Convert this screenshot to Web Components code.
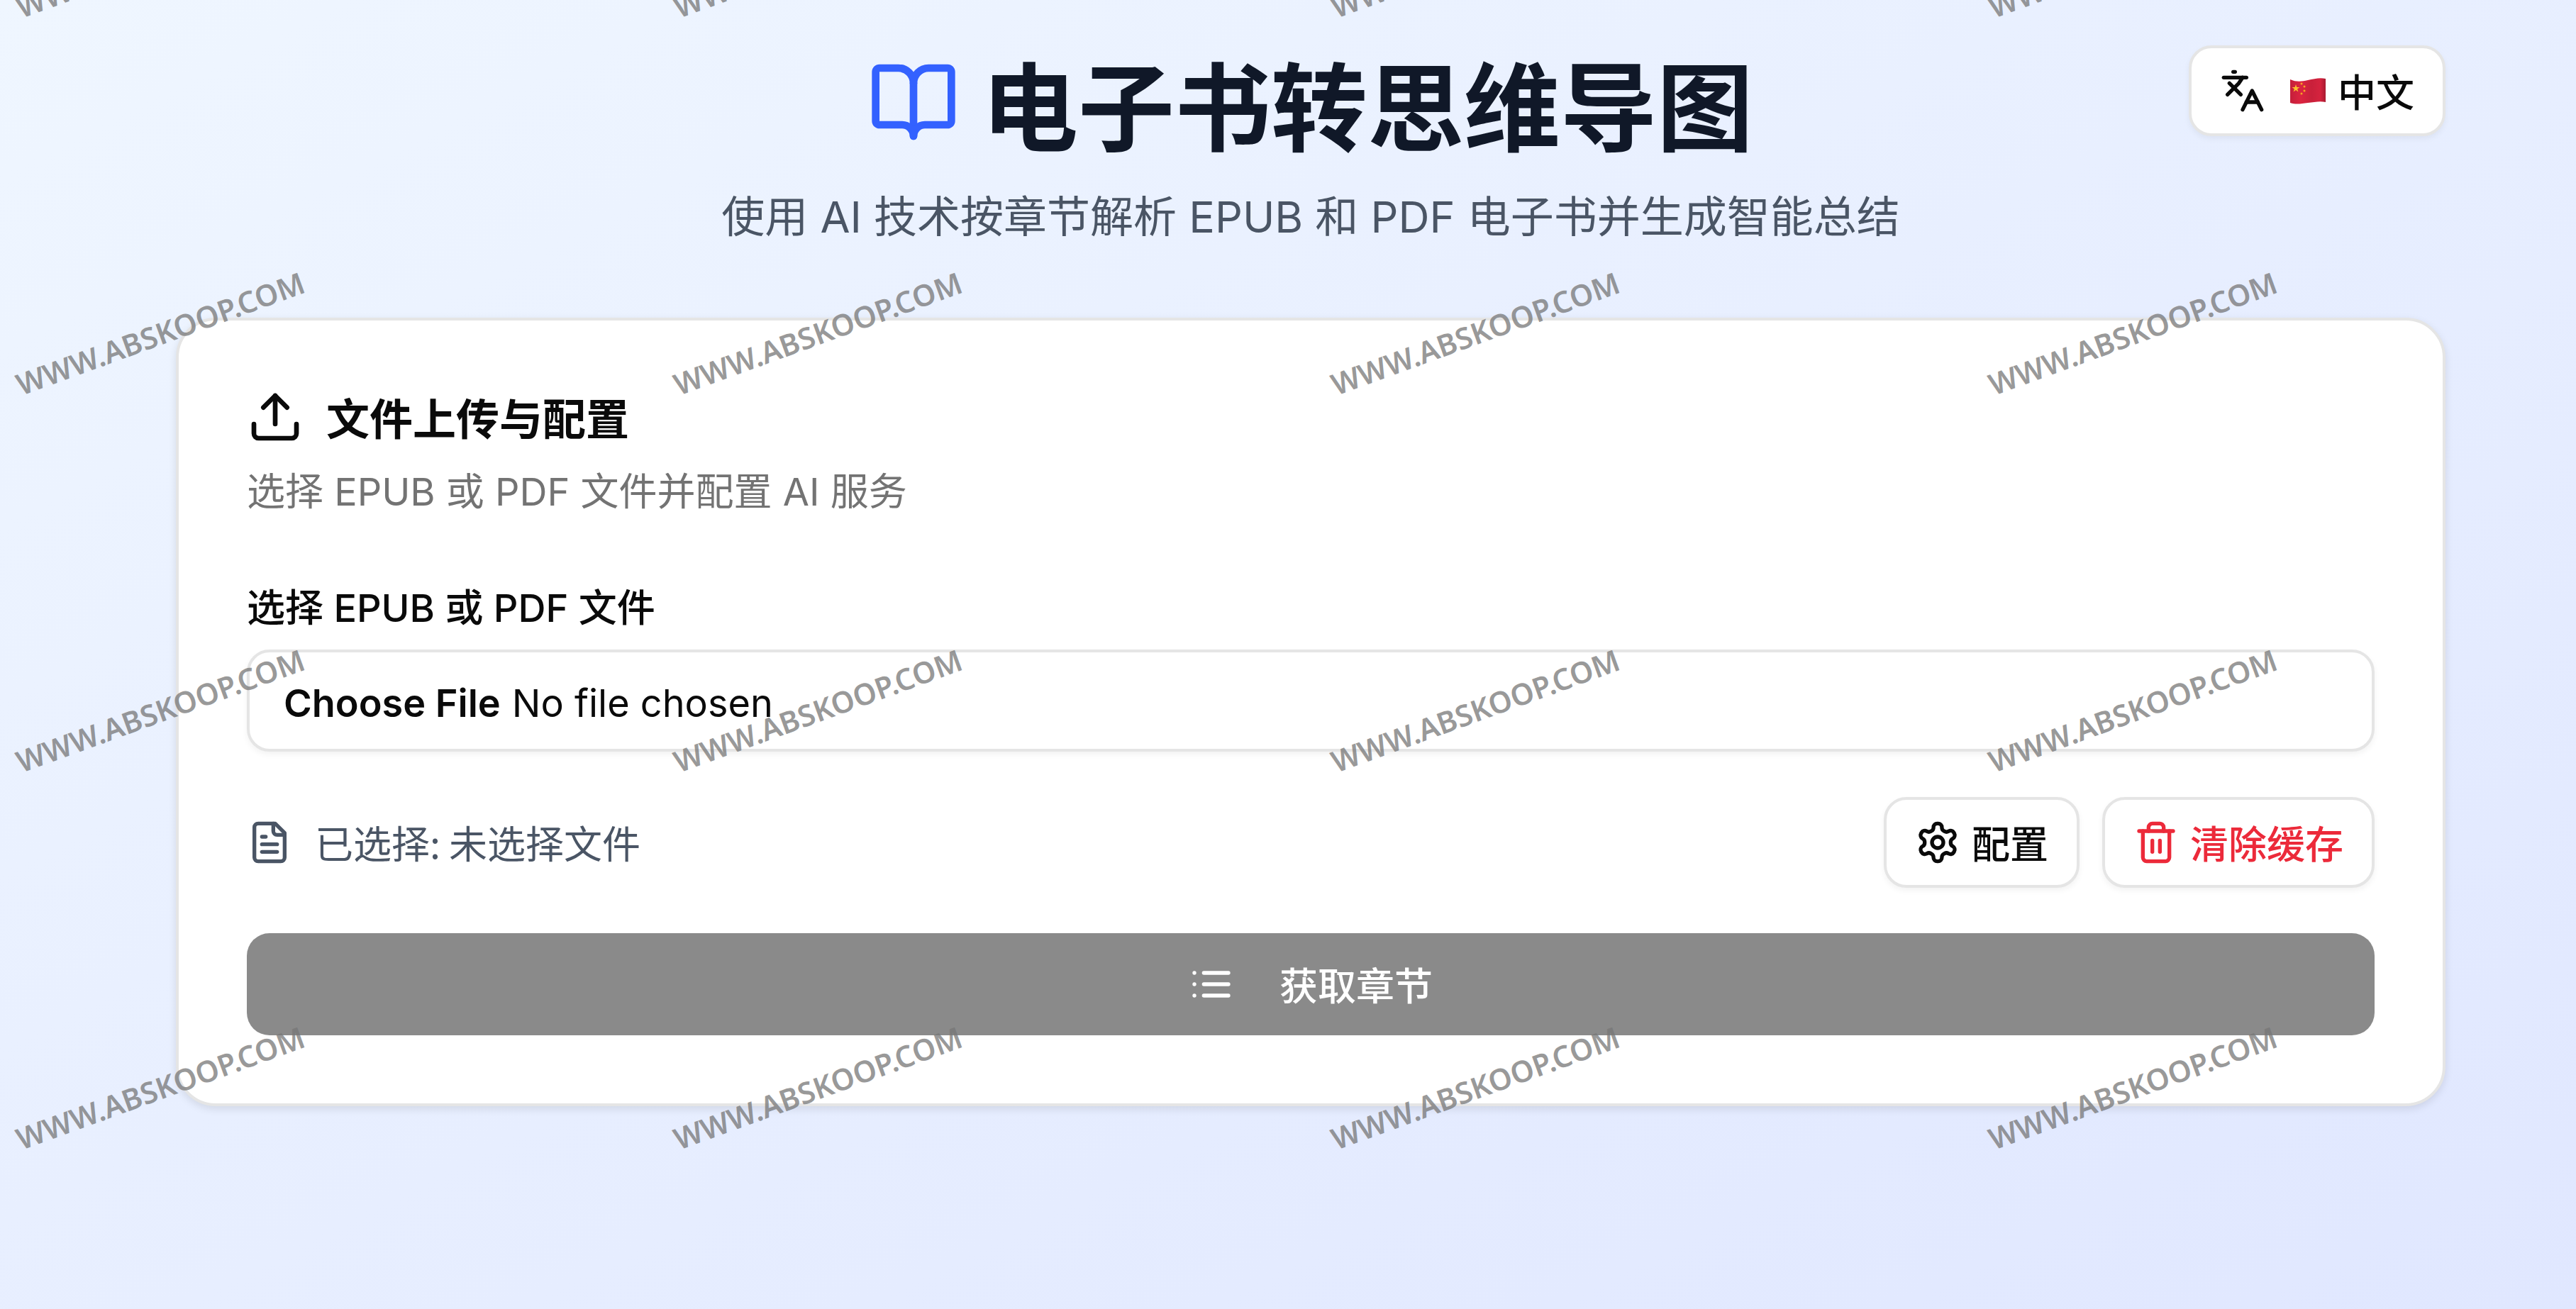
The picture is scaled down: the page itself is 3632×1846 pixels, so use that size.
<!DOCTYPE html>
<html lang="zh-CN">
<head>
<meta charset="utf-8">
<title>电子书转思维导图</title>
<style>
  body {
    margin: 0;
    font-family: Inter, "Noto Sans CJK SC", sans-serif;
    color: #0a0a0a;
  }
</style>
</head>
<body>

<ebook-app>
  <page-header slot="header">
    <span slot="title">电子书转思维导图</span>
    <span slot="subtitle">使用 AI 技术按章节解析 EPUB 和 PDF 电子书并生成智能总结</span>
    <lang-button slot="action">中文</lang-button>
  </page-header>
  <upload-card>
    <span slot="title">文件上传与配置</span>
    <span slot="description">选择 EPUB 或 PDF 文件并配置 AI 服务</span>
    <file-field label="选择 EPUB 或 PDF 文件"></file-field>
    <file-status>
      已选择: 未选择文件
      <ui-button slot="actions" icon="settings">配置</ui-button>
      <ui-button slot="actions" icon="trash" variant="danger">清除缓存</ui-button>
    </file-status>
    <ui-button icon="list" variant="primary">获取章节</ui-button>
  </upload-card>
</ebook-app>

<template id="ebook-app">
  <style>
    :host {
      display: block;
      position: relative;
      overflow: hidden;
      box-sizing: border-box;
      min-height: 100vh;
      padding: 64px 184px 64px 248px;
      background: linear-gradient(to bottom right, #eff6ff, #e0e7ff);
    }
    main { margin-top: 92px; }
  </style>
  <slot name="header"></slot>
  <main><slot></slot></main>
  <water-mark text="WWW.ABSKOOP.COM"></water-mark>
</template>

<template id="page-header">
  <style>
    :host { display: block; }
    header {
      display: grid;
      grid-template-columns: 1fr auto 1fr;
      align-items: start;
    }
    .center { grid-column: 2; text-align: center; }
    h1 {
      display: flex;
      align-items: center;
      justify-content: center;
      gap: 32px;
      margin: 0 0 32px;
      font-family: "Noto Sans CJK SC", sans-serif;
      font-size: 136px;
      line-height: 160px;
      font-weight: 700;
      color: #101828;
    }
    svg-icon { --size: 128px; color: #3361ff; }
    p {
      margin: 0;
      font-size: 61px;
      line-height: 100px;
      color: #4a5565;
    }
    .action { justify-self: end; }
  </style>
  <header>
    <div class="center">
      <h1><svg-icon name="book"></svg-icon><slot name="title"></slot></h1>
      <p><slot name="subtitle"></slot></p>
    </div>
    <div class="action"><slot name="action"></slot></div>
  </header>
</template>

<template id="lang-button">
  <style>
    :host { display: block; }
    button {
      display: flex;
      align-items: center;
      box-sizing: border-box;
      height: 128px;
      padding: 0 40px;
      border: 4px solid #e5e5e5;
      border-radius: 32px;
      background: #fff;
      box-shadow: 0 4px 8px rgb(0 0 0 / 5%);
      font: 500 54px/80px "Noto Sans CJK SC", sans-serif;
      color: #0a0a0a;
    }
    .flag { width: 56px; height: 40px; margin: 0 14px 0 32px; }
  </style>
  <button type="button">
    <svg-icon name="languages"></svg-icon>
    <svg class="flag" viewBox="0 0 56 40" role="img" aria-label="中国">
      <defs>
        <linearGradient id="cloth">
          <stop offset="0" stop-color="#c41f3a"/>
          <stop offset=".3" stop-color="#dc2440"/>
          <stop offset=".6" stop-color="#c9203a"/>
          <stop offset=".85" stop-color="#d5233e"/>
          <stop offset="1" stop-color="#a81a31"/>
        </linearGradient>
      </defs>
      <path fill="url(#cloth)" d="M3 4c9 4 16 3 25 1s17-4 25-2v33c-8-2-16 0-25 1s-16 3-25 0z"/>
      <path fill="#fbc02d" d="m11 11 1.300 4h4.200l-3.400 2.500 1.300 4-3.400-2.500-3.400 2.500 1.300-4-3.400-2.500h4.200z"/>
      <g fill="#f5a623">
        <circle cx="19" cy="10" r="1.500"/>
        <circle cx="23" cy="14" r="1.500"/>
        <circle cx="23" cy="20" r="1.500"/>
        <circle cx="19" cy="24" r="1.500"/>
      </g>
    </svg>
    <slot></slot>
  </button>
</template>

<template id="upload-card">
  <style>
    :host {
      display: block;
      padding: 96px;
      border: 4px solid #e5e5e5;
      border-radius: 56px;
      background: #fff;
      box-shadow: 0 4px 12px rgb(0 0 0 / 10%);
    }
    .head { margin-bottom: 92px; }
    h2 {
      display: flex;
      align-items: center;
      gap: 32px;
      margin: 0 0 24px;
      font-family: "Noto Sans CJK SC", sans-serif;
      font-size: 61px;
      line-height: 80px;
      font-weight: 600;
    }
    svg-icon { --size: 80px; }
    p {
      margin: 0;
      font-size: 54px;
      line-height: 84px;
      color: #737373;
    }
    .body {
      display: flex;
      flex-direction: column;
      gap: 64px;
    }
  </style>
  <div class="head">
    <h2><svg-icon name="upload"></svg-icon><slot name="title"></slot></h2>
    <p><slot name="description"></slot></p>
  </div>
  <div class="body"><slot></slot></div>
</template>

<template id="file-field">
  <style>
    :host { display: block; }
    label {
      display: block;
      margin-bottom: 28px;
      font-size: 54px;
      line-height: 60px;
      font-weight: 500;
    }
    input {
      display: block;
      box-sizing: border-box;
      width: 100%;
      padding: 8px 48px 0;
      border: 4px solid #e5e5e5;
      border-radius: 32px;
      background: #fff;
      box-shadow: 0 4px 8px rgb(0 0 0 / 5%);
      font: 400 54px/128px Inter, "Noto Sans CJK SC", sans-serif;
      color: #0a0a0a;
    }
    input::file-selector-button {
      margin: 0 16px 0 0;
      padding: 0;
      border: 0;
      background: transparent;
      font: inherit;
      font-weight: 600;
      color: inherit;
    }
  </style>
  <label for="file"></label>
  <input id="file" type="file" accept=".epub,.pdf">
</template>

<template id="file-status">
  <style>
    :host {
      display: flex;
      align-items: center;
      justify-content: space-between;
    }
    .text {
      display: flex;
      align-items: center;
      gap: 32px;
      font-family: "Noto Sans CJK SC", sans-serif;
      font-size: 54px;
      line-height: 80px;
      color: #4a5565;
    }
    .actions { display: flex; gap: 32px; }
  </style>
  <div class="text"><svg-icon name="file"></svg-icon><span><slot></slot></span></div>
  <div class="actions"><slot name="actions"></slot></div>
</template>

<template id="ui-button">
  <style>
    :host { display: block; }
    button {
      display: flex;
      align-items: center;
      justify-content: center;
      gap: 16px;
      box-sizing: border-box;
      width: 100%;
      height: 128px;
      padding: 0 40px;
      border: 4px solid #e5e5e5;
      border-radius: 32px;
      background: #fff;
      box-shadow: 0 4px 8px rgb(0 0 0 / 5%);
      font: 500 54px/80px "Noto Sans CJK SC", sans-serif;
      color: #0a0a0a;
    }
    :host([variant="danger"]) button { color: #ec2a3a; }
    :host([variant="primary"]) button {
      gap: 64px;
      height: 144px;
      border: 0;
      background: #8a8a8a;
      box-shadow: none;
      color: #fff;
    }
  </style>
  <button type="button"><svg-icon></svg-icon><slot></slot></button>
</template>

<template id="water-mark">
  <style>
    /* lies over the whole page, one text per tile */
    :host {
      position: absolute;
      inset: 0;
      display: grid;
      grid-template-columns: repeat(4, 927px);
      grid-auto-rows: 532px;
      overflow: hidden;
      pointer-events: none;
      margin-top: -500px;
      padding-left: 32px;
    }
    span {
      align-self: end;
      justify-self: start;
      transform: rotate(-20deg);
      transform-origin: left bottom;
      font: 600 42px/44px "Noto Sans", sans-serif;
      color: rgb(119 119 119 / 75%);
    }
  </style>
</template>

<script>
const ICONS = {
  book: '<path d="M12 7v14"/><path d="M3 18a1 1 0 0 1-1-1V4a1 1 0 0 1 1-1h5a4 4 0 0 1 4 4 4 4 0 0 1 4-4h5a1 1 0 0 1 1 1v13a1 1 0 0 1-1 1h-6a3 3 0 0 0-3 3 3 3 0 0 0-3-3z"/>',
  languages: '<path d="m5 8 6 6"/><path d="m4 14 6-6 2-3"/><path d="M2 5h12"/><path d="M7 2h1"/><path d="m22 22-5-10-5 10"/><path d="M14 18h6"/>',
  upload: '<path d="M12 3v12"/><path d="m17 8-5-5-5 5"/><path d="M21 15v4a2 2 0 0 1-2 2H5a2 2 0 0 1-2-2v-4"/>',
  file: '<path d="M15 2H6a2 2 0 0 0-2 2v16a2 2 0 0 0 2 2h12a2 2 0 0 0 2-2V7Z"/><path d="M14 2v4a2 2 0 0 0 2 2h4"/><path d="M10 9H8"/><path d="M16 13H8"/><path d="M16 17H8"/>',
  settings: '<path d="M12.220 2h-.44a2 2 0 0 0-2 2v.18a2 2 0 0 1-1 1.730l-.43.25a2 2 0 0 1-2 0l-.15-.08a2 2 0 0 0-2.730.73l-.22.38a2 2 0 0 0 .73 2.730l.15.1a2 2 0 0 1 1 1.720v.51a2 2 0 0 1-1 1.740l-.15.09a2 2 0 0 0-.73 2.730l.22.38a2 2 0 0 0 2.730.73l.15-.08a2 2 0 0 1 2 0l.43.25a2 2 0 0 1 1 1.730V20a2 2 0 0 0 2 2h.44a2 2 0 0 0 2-2v-.18a2 2 0 0 1 1-1.730l.43-.25a2 2 0 0 1 2 0l.15.08a2 2 0 0 0 2.730-.73l.22-.39a2 2 0 0 0-.73-2.730l-.15-.08a2 2 0 0 1-1-1.740v-.5a2 2 0 0 1 1-1.740l.15-.09a2 2 0 0 0 .73-2.730l-.22-.38a2 2 0 0 0-2.730-.73l-.15.08a2 2 0 0 1-2 0l-.43-.25a2 2 0 0 1-1-1.730V4a2 2 0 0 0-2-2z"/><circle cx="12" cy="12" r="3"/>',
  trash: '<path d="M3 6h18"/><path d="M19 6v14c0 1-1 2-2 2H7c-1 0-2-1-2-2V6"/><path d="M8 6V4c0-1 1-2 2-2h4c1 0 2 1 2 2v2"/><path d="M10 11v6"/><path d="M14 11v6"/>',
  list: '<path d="M3 6h.01"/><path d="M3 12h.01"/><path d="M3 18h.01"/><path d="M8 6h13"/><path d="M8 12h13"/><path d="M8 18h13"/>'
};

// base class: clones the template whose id is the tag name
class TemplateElement extends HTMLElement {
  constructor() {
    super();
    const template = document.getElementById(this.localName);
    this.attachShadow({ mode: 'open' });
    this.shadowRoot.append(template.content.cloneNode(true));
  }
}

class SvgIcon extends HTMLElement {
  constructor() {
    super();
    this.attachShadow({ mode: 'open' });
  }
  static get observedAttributes() {
    return ['name'];
  }
  attributeChangedCallback() {
    this.render();
  }
  render() {
    this.shadowRoot.innerHTML = `
      <style>
        :host { display: block; flex: none; width: var(--size, 64px); height: var(--size, 64px); }
        svg { display: block; width: 100%; height: 100%; }
      </style>
      <svg viewBox="0 0 24 24" fill="none" stroke="currentColor" stroke-width="2"
        stroke-linecap="round" stroke-linejoin="round" aria-hidden="true">${ICONS[this.getAttribute('name')]}</svg>
    `;
  }
}
customElements.define('svg-icon', SvgIcon);

class WaterMark extends TemplateElement {
  connectedCallback() {
    for (let i = 0; i < 16; i++) {
      const span = document.createElement('span');
      span.textContent = this.getAttribute('text');
      span.setAttribute('aria-hidden', 'true');
      this.shadowRoot.append(span);
    }
  }
}
customElements.define('water-mark', WaterMark);

class UiButton extends TemplateElement {
  connectedCallback() {
    this.shadowRoot.querySelector('svg-icon').setAttribute('name', this.getAttribute('icon'));
  }
}
customElements.define('ui-button', UiButton);

class FileField extends TemplateElement {
  connectedCallback() {
    this.shadowRoot.querySelector('label').textContent = this.getAttribute('label');
  }
}
customElements.define('file-field', FileField);

customElements.define('lang-button', class extends TemplateElement {});
customElements.define('file-status', class extends TemplateElement {});
customElements.define('upload-card', class extends TemplateElement {});
customElements.define('page-header', class extends TemplateElement {});
customElements.define('ebook-app', class extends TemplateElement {});
</script>
</body>
</html>
